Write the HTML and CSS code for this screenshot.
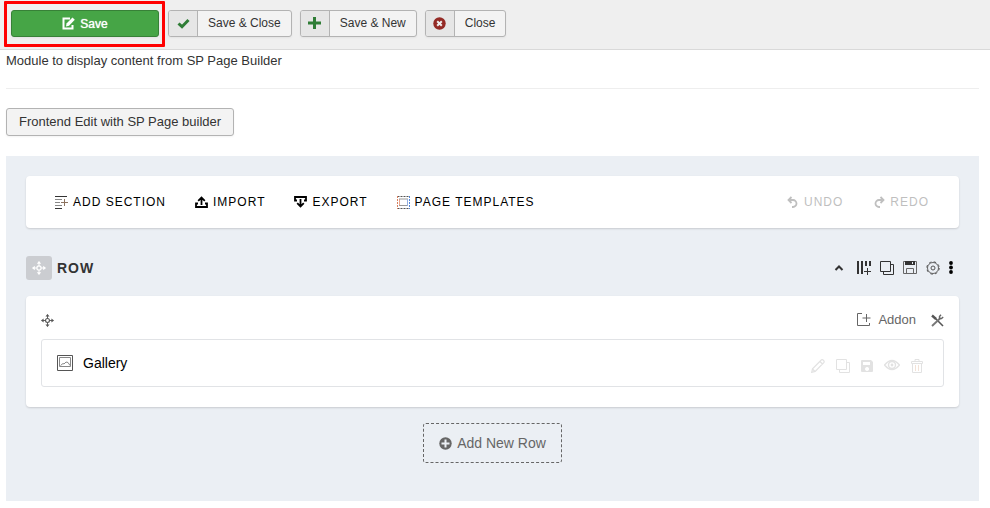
FILE: index.html
```html
<!DOCTYPE html>
<html lang="en">
<head>
<meta charset="utf-8">
<meta name="viewport" content="width=device-width, initial-scale=1">
<title>Module: SP Page Builder</title>
<link rel="stylesheet" href="styles.css">
</head>
<body>
<svg class="sprite" aria-hidden="true">
  <symbol id="copy" viewBox="0 0 14 14"><path d="M.5.5h10v10H.5zM10.500 3.500h3v10h-10v-3" fill="none" stroke="currentColor"/></symbol>
  <symbol id="move" viewBox="0 0 14 14"><path d="M7 .8v4M7 9.200v4M.8 7h4M9.200 7h4" fill="none" stroke="currentColor"/><path d="M7 0 9.200 2.800H4.800zM7 14l2.200-2.800H4.800zM0 7l2.800-2.200v4.400zM14 7l-2.800-2.200v4.400z" fill="currentColor"/><circle cx="7" cy="7" r="2.100" fill="none" stroke="currentColor" stroke-width="1.200"/></symbol>
</svg>
<header class="toolbar">
  <div class="highlight">
    <button class="btn btn-save" type="button"><svg width="13" height="13" viewBox="0 0 13 13"><path d="M8 1.500H1.500v10h9V8" fill="none" stroke="currentColor" stroke-width="2"/><path d="M4 9.500 4.500 6.500 10.500.5 12.800 2.800 7 8.800z" fill="currentColor"/></svg>Save</button>
  </div>
  <button class="btn btn-wide" type="button"><span class="btn-icon green"><svg width="13" height="12" viewBox="0 0 13 12"><path d="M1.500 5.500 5 8.700 11.500 2" fill="none" stroke="currentColor" stroke-width="3"/></svg></span><span class="btn-label">Save &amp; Close</span></button>
  <button class="btn" type="button"><span class="btn-icon green"><svg width="13" height="13" viewBox="0 0 13 13"><path d="M6.500 0v12M0 6h13" fill="none" stroke="currentColor" stroke-width="3"/></svg></span><span class="btn-label">Save &amp; New</span></button>
  <button class="btn" type="button"><span class="btn-icon red"><svg width="13" height="13" viewBox="0 0 13 13"><circle cx="6.500" cy="6.500" r="6.200" fill="currentColor"/><path d="m4.200 4.200 4.600 4.600M8.800 4.200 4.200 8.800" stroke="#eee" stroke-width="2"/></svg></span><span class="btn-label">Close</span></button>
</header>
<main class="content">
  <p class="description">Module to display content from SP Page Builder</p>
  <hr class="divider">
  <button class="btn btn-frontend" type="button">Frontend Edit with SP Page builder</button>
  <section class="builder">
    <nav class="card actions">
      <button class="action" type="button"><svg width="13" height="13" viewBox="0 0 13 13"><path d="M0 .5h12M0 12.500h7" stroke="#333"/><path d="M0 3.500h7M0 6.500h5M0 9.500h7" stroke="#888"/><path d="M9.500 3v7M6 6.500h7" stroke="#8d7460"/></svg>ADD SECTION</button>
      <button class="action" type="button"><svg width="13" height="12" viewBox="0 0 13 12"><path d="M3 7.500H1V11h11V7.500h-2M6.500 9V2M3.200 4.800 6.500 1.500l3.300 3.300" fill="none" stroke="currentColor" stroke-width="1.800"/></svg>IMPORT</button>
      <button class="action" type="button"><svg width="13" height="12" viewBox="0 0 13 12"><path d="M3 4.500H1V1h11v3.500h-2M6.500 3v7M3.200 7.200l3.300 3.300 3.300-3.300" fill="none" stroke="currentColor" stroke-width="1.800"/></svg>EXPORT</button>
      <button class="action" type="button"><svg width="13" height="13" viewBox="0 0 13 13"><path d="M.5.500h12M.5 12.500h12" stroke="#555" stroke-dasharray="2 1"/><path d="M.5 0v13" stroke="#d9805f" stroke-dasharray="2 1"/><path d="M12.500 0v13" stroke="#5085d8" stroke-dasharray="2 1"/><path d="M2.500 3v7" stroke="#eca58d"/><path d="M2 9.500h9M2 3h9" stroke="#999"/><path d="M10.500 3v7" stroke="#94afe0"/></svg>PAGE TEMPLATES</button>
      <div class="history">
        <button class="action" type="button" disabled><svg width="12" height="12" viewBox="0 0 12 12"><path d="M4.500 1 1.500 4l3 3M2 4h4a3.500 3.500 0 0 1 0 7H5" fill="none" stroke="currentColor" stroke-width="1.800"/></svg>UNDO</button>
        <button class="action" type="button" disabled><svg width="12" height="12" viewBox="0 0 12 12"><path d="m7.500 1 3 3-3 3M10 4H6a3.500 3.500 0 0 0 0 7h1" fill="none" stroke="currentColor" stroke-width="1.800"/></svg>REDO</button>
      </div>
    </nav>
    <div class="row-head">
      <button class="handle" type="button" aria-label="Move row"><svg width="14" height="14"><use href="#move"/></svg></button>
      <h2 class="row-title">ROW</h2>
      <div class="row-tools">
        <button class="tool tool-collapse" type="button" aria-label="Collapse"><svg width="10" height="14" viewBox="0 0 10 14"><path d="m1.500 9 3.500-3.500L8.500 9" fill="none" stroke="currentColor" stroke-width="2"/></svg></button>
        <button class="tool" type="button" aria-label="Columns"><svg width="14" height="14" viewBox="0 0 14 14"><path d="M1 0v13M5 0v13M9 0v5M13 0v5" stroke="currentColor" stroke-width="2"/><path d="M10.500 7v7M7 10.500h7" stroke="currentColor"/></svg></button>
        <button class="tool" type="button" aria-label="Duplicate row"><svg width="14" height="14"><use href="#copy"/></svg></button>
        <button class="tool" type="button" aria-label="Save row"><svg width="14" height="14" viewBox="0 0 14 14"><path d="M.5 12.500V.5h13v12zM3.500 12.500v-5h7v5" fill="none" stroke="#666"/><path d="M2 0h10v4H2z" fill="currentColor"/><path d="M9 1h1v2H9z" fill="#ebeff4"/></svg></button>
        <button class="tool" type="button" aria-label="Row options"><svg width="14" height="14" viewBox="0 0 14 14"><circle cx="7" cy="7" r="5.500" fill="none" stroke="#666"/><circle cx="7" cy="7" r="6.200" fill="none" stroke="#555" stroke-dasharray="2.500 2.370"/><circle cx="7" cy="7" r="2" fill="none" stroke="#555"/></svg></button>
        <button class="tool" type="button" aria-label="More"><svg width="4" height="14" viewBox="0 0 4 14"><circle cx="2" cy="2" r="1.900"/><circle cx="2" cy="6.500" r="1.900"/><circle cx="2" cy="11" r="1.900"/></svg></button>
      </div>
    </div>
    <div class="card column">
      <div class="column-head">
        <button class="tool" type="button" aria-label="Move column"><svg width="13" height="13"><use href="#move"/></svg></button>
        <div class="column-tools">
          <button class="tool add-addon" type="button"><svg width="14" height="14" viewBox="0 0 14 14"><path d="M5 .5H.5v12h12V10M9.500 1v8M5.500 5h8" fill="none" stroke="currentColor"/></svg>Addon</button>
          <button class="tool" type="button" aria-label="Column options"><svg width="13" height="13" viewBox="0 0 13 13"><path d="m1 1.500 4 3.500" stroke="currentColor" stroke-width="2.400"/><path d="m4 4 8 8" stroke="currentColor" stroke-width="1.600"/><path d="m1 12 8.500-8" stroke="#777" stroke-width="1.800"/><path d="M10 .8 8.500 2.500v2h2L12.200 3" fill="none" stroke="#666" stroke-width="1.400"/></svg></button>
        </div>
      </div>
      <article class="addon">
        <svg width="16" height="16" viewBox="0 0 16 16"><path d="M.5.5h15v15H.5z" fill="none" stroke="#555"/><path d="M2.500 2.500h11v9h-11zM3.500 10.500l2.500-2 1 .5 2-2 2 .5 2 3" fill="none" stroke="#888"/></svg>
        <span class="addon-name">Gallery</span>
        <div class="addon-tools">
          <button class="tool" type="button" aria-label="Edit"><svg width="14" height="14" viewBox="0 0 14 14"><path d="m.7 13.300.8-3.500L10.500.8q1-.5 2 .5t.5 2L4.200 12.400zM9 2.500 11.500 5M1.500 10l2.500 2.500" fill="none" stroke="currentColor" stroke-width="1.200"/></svg></button>
          <button class="tool" type="button" aria-label="Duplicate"><svg width="14" height="14"><use href="#copy"/></svg></button>
          <button class="tool" type="button" aria-label="Save addon"><svg width="12" height="12" viewBox="0 0 12 12"><path fill-rule="evenodd" d="M1 0h9l2 2v9q0 1-1 1H1q-1 0-1-1V1q0-1 1-1zM2 2v3h7V2zM6 7a2 2 0 1 0 .1 0z" fill="currentColor"/></svg></button>
          <button class="tool" type="button" aria-label="Toggle visibility"><svg width="16" height="14" viewBox="0 0 16 14"><path d="M.5 6Q8-3 15.500 6 8 15 .5 6z" fill="none" stroke="currentColor" stroke-width="1.400"/><circle cx="8" cy="6" r="3.500" fill="none" stroke="currentColor" stroke-width="1.400"/><circle cx="8" cy="6" r="1.400" fill="currentColor"/></svg></button>
          <button class="tool" type="button" aria-label="Delete"><svg width="12" height="14" viewBox="0 0 12 14"><path d="M4 2V.5h4V2M.5 2.500h11v2H.5zM1.500 5v8.500h9V5" fill="none" stroke="currentColor"/><path d="M4.500 6v6M7.500 6v6" stroke="#f3e3d8"/></svg></button>
        </div>
      </article>
    </div>
    <button class="add-row" type="button"><svg width="13" height="13" viewBox="0 0 13 13"><circle cx="6.500" cy="6.500" r="6.200" fill="currentColor"/><path d="M6.500 2.500v8M2.500 6.500h8" stroke="#ebeff4" stroke-width="2"/></svg>Add New Row</button>
  </section>
</main>
</body>
</html>
```
FILE: styles.css
```css
* { box-sizing: border-box; }
body {
  margin: 0;
  background: #fff;
  color: #333;
  font: 13px/18px "Liberation Sans", Arial, sans-serif;
}
button {
  margin: 0;
  padding: 0;
  border: 0;
  background: none;
  color: inherit;
  font: inherit;
}
svg { display: block; flex: none; }
.sprite { position: absolute; width: 0; height: 0; }

.toolbar {
  display: flex;
  align-items: flex-start;
  gap: 8px;
  padding: 10px 11px 12px;
  border-bottom: 1px solid #d9d9d9;
  background: #efefef;
}
.highlight { position: relative; margin-right: 1px; }
.highlight::after {
  content: "";
  position: absolute;
  inset: -9px -6px -10px -7px;
  border: 3px solid #f00;
  border-radius: 1px;
  pointer-events: none;
}
.btn {
  display: flex;
  align-items: stretch;
  height: 27px;
  border: 1px solid #b3b3b3;
  border-radius: 3px;
  background: #f3f3f3;
  box-shadow: 0 1px 2px rgba(0, 0, 0, .05);
  font-size: 12px;
}
.btn-save {
  align-items: center;
  justify-content: center;
  gap: 5px;
  min-width: 148px;
  border-color: #378137;
  background: #46a546;
  color: #fff;
  text-shadow: 0 0 1px #fff;
}
.btn-icon {
  display: grid;
  place-items: center;
  width: 29px;
  border-right: 1px solid #b3b3b3;
  border-radius: 2px 0 0 2px;
  background: #e6e6e6;
}
.green { color: #2f7d36; }
.red { color: #942a25; }
.btn-label { padding: 0 10px; line-height: 25px; }

.content { padding: 2px 11px 7px 6px; }
.description { margin: 0; }
.divider { margin: 18px 0 19px; border: 0; border-top: 1px solid #eee; }
.btn-frontend {
  align-items: center;
  height: 28px;
  padding: 0 12px;
  font-size: 13px;
}
.builder {
  display: flex;
  flex-direction: column;
  margin-top: 20px;
  padding: 20px 20px 38px;
  background: #ebeff4;
}
.card {
  border-radius: 4px;
  background: #fff;
  box-shadow: 0 1px 2px rgba(0, 0, 0, .15);
}
.actions {
  display: flex;
  align-items: center;
  gap: 29px;
  padding: 17px 30px 17px 29px;
}
.action {
  display: flex;
  align-items: center;
  gap: 5px;
  color: #000;
  font-size: 12px;
  letter-spacing: 1px;
}
.history { display: flex; gap: 30px; margin-left: auto; }
.action:disabled { color: #bfbfbf; }

.row-head { display: flex; align-items: center; margin: 28px 0 16px; }
.handle {
  display: grid;
  place-items: center;
  width: 26px;
  height: 24px;
  border-radius: 3px;
  background: #cbcdd1;
  color: #fff;
}
.row-title { margin: 0 0 0 5px; font-size: 14px; line-height: 20px; letter-spacing: 1px; }
.row-tools { display: flex; gap: 9px; margin-left: auto; padding-right: 6px; }
.tool { display: flex; align-items: center; }
.tool-collapse { margin-right: 4px; }
.column { padding: 15px 15px 20px; }
.column-head {
  display: flex;
  align-items: center;
  justify-content: space-between;
  margin-bottom: 10px;
  color: #555;
}
.column-tools { display: flex; gap: 15px; }
.add-addon { gap: 7px; color: #666; }
.addon {
  display: flex;
  align-items: center;
  gap: 10px;
  height: 48px;
  padding: 0 20px 0 15px;
  border: 1px solid #e1e3e6;
  border-radius: 3px;
}
.addon-name { color: #000; font-size: 14px; }
.addon-tools {
  display: flex;
  align-items: center;
  gap: 11px;
  margin-left: auto;
  padding-top: 6px;
  color: #e2e2e2;
}
.add-row {
  display: flex;
  align-items: center;
  align-self: center;
  gap: 5px;
  height: 40px;
  margin-top: 16px;
  padding: 0 15px;
  border: 1px dashed #666;
  border-radius: 3px;
  color: #666;
  font-size: 14px;
}
```
